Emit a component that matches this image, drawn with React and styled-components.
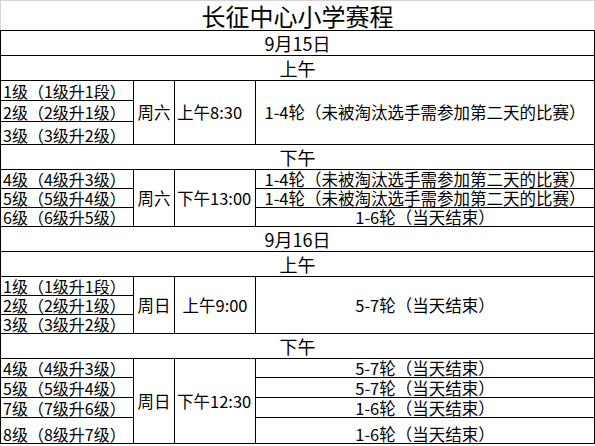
import React from "react";
import styled, { createGlobalStyle } from "styled-components";

const GlobalStyle = createGlobalStyle`
  html, body {
    margin: 0;
    padding: 0;
    background: #fff;
  }
  body {
    font-family: "Noto Sans CJK SC", "Liberation Sans", sans-serif;
    color: #000;
  }
`;

const Sheet = styled.table`
  border-collapse: collapse;
  table-layout: fixed;
  width: 594px;
`;

// row height is the spacing between two grid lines
const Row = styled.tr`
  height: ${(p) => p.$h}px;
`;

const Cell = styled.td`
  border: 1px solid #000;
  padding: 0 2px ${(p) => p.$pb ?? 1}px;
  font-size: ${(p) => p.$size || 16.5}px;
  line-height: 1;
  text-align: ${(p) => p.$align || "left"};
  vertical-align: ${(p) => p.$valign || "bottom"};
  white-space: nowrap;
  overflow: hidden;
`;

const TitleCell = styled.td`
  border: 1px solid #d4d4d4;
  border-bottom: 1px solid #000;
  padding: 0 0 2px;
  font-size: 24px;
  line-height: 1;
  text-align: center;
  vertical-align: bottom;
  white-space: nowrap;
`;

const long = "1-4轮（未被淘汰选手需参加第二天的比赛）";

const days = [
  {
    date: "9月15日",
    sessions: [
      {
        period: "上午",
        weekday: "周六",
        time: "上午8:30",
        timeAlign: "left",
        grades: [
          ["1级（1级升1段）", 20],
          ["2级（2级升1级）", 21],
          ["3级（3级升2级）", 23],
        ],
        rounds: [long],
      },
      {
        period: "下午",
        weekday: "周六",
        time: "下午13:00",
        timeAlign: "left",
        grades: [
          ["4级（4级升3级）", 19],
          ["5级（5级升4级）", 19],
          ["6级（6级升5级）", 19],
        ],
        rounds: [long, long, "1-6轮（当天结束）"],
      },
    ],
  },
  {
    date: "9月16日",
    sessions: [
      {
        period: "上午",
        weekday: "周日",
        time: "上午9:00",
        timeAlign: "center",
        grades: [
          ["1级（1级升1段）", 19],
          ["2级（2级升1级）", 19],
          ["3级（3级升2级）", 19],
        ],
        rounds: ["5-7轮（当天结束）"],
      },
      {
        period: "下午",
        weekday: "周日",
        time: "下午12:30",
        timeAlign: "left",
        grades: [
          ["4级（4级升3级）", 19],
          ["5级（5级升4级）", 20],
          ["7级（7级升6级）", 20],
          ["8级（8级升7级）", 26],
        ],
        rounds: [
          "5-7轮（当天结束）",
          "5-7轮（当天结束）",
          "1-6轮（当天结束）",
          "1-6轮（当天结束）",
        ],
      },
    ],
  },
];

const Session = ({ s }) => {
  const n = s.grades.length;
  const merged = s.rounds.length === 1;
  return (
    <>
      <Row $h={25}>
        <Cell colSpan={4} $size={18} $align="center" $pb={3}>
          {s.period}
        </Cell>
      </Row>
      {s.grades.map(([grade, h], i) => (
        <Row key={grade} $h={h}>
          <Cell $size={16}>{grade}</Cell>
          {i === 0 && (
            <>
              <Cell rowSpan={n} $align="center" $valign="middle" $pb={0}>
                {s.weekday}
              </Cell>
              <Cell rowSpan={n} $align={s.timeAlign} $valign="middle" $pb={0}>
                {s.time}
              </Cell>
            </>
          )}
          {merged ? (
            i === 0 && (
              <Cell rowSpan={n} $align="center" $valign="middle" $pb={0}>
                {s.rounds[0]}
              </Cell>
            )
          ) : (
            <Cell $align="center">{s.rounds[i]}</Cell>
          )}
        </Row>
      ))}
    </>
  );
};

export default function App() {
  return (
    <>
      <GlobalStyle />
      <Sheet>
        <colgroup>
          <col style={{ width: 133 }} />
          <col style={{ width: 41 }} />
          <col style={{ width: 81 }} />
          <col style={{ width: 339 }} />
        </colgroup>
        <tbody>
          <Row $h={30}>
            <TitleCell colSpan={4}>长征中心小学赛程</TitleCell>
          </Row>
          {days.map((d) => (
            <React.Fragment key={d.date}>
              <Row $h={25}>
                <Cell colSpan={4} $size={18} $align="center" $pb={3}>
                  {d.date}
                </Cell>
              </Row>
              {d.sessions.map((s) => (
                <Session key={d.date + s.period} s={s} />
              ))}
            </React.Fragment>
          ))}
        </tbody>
      </Sheet>
    </>
  );
}
